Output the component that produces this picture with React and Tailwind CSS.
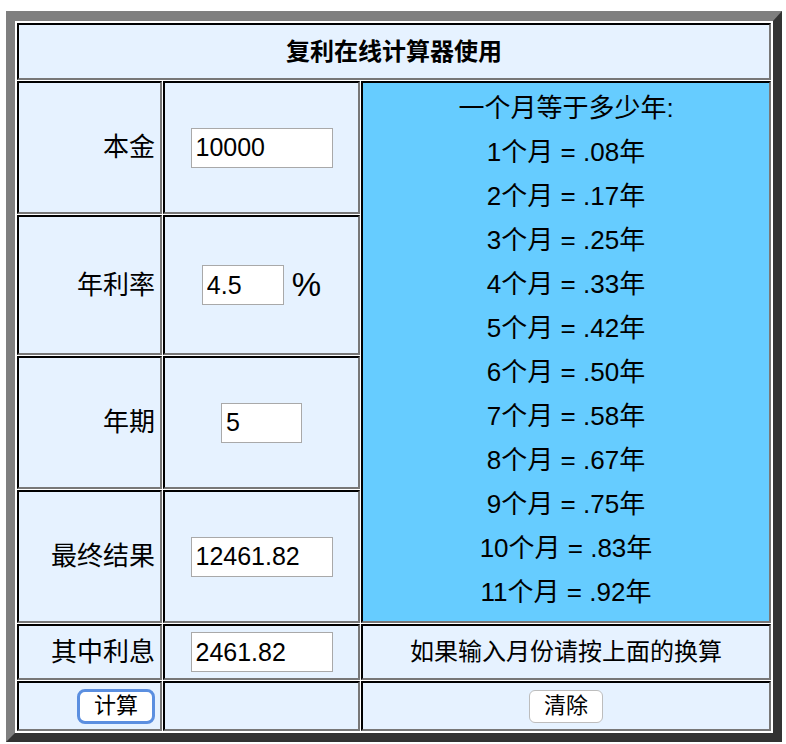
import { useState } from 'react'

const cell = 'border-2 border-t-black border-l-black border-r-[#777] border-b-[#777] bg-[#e6f2ff]'
const field = 'h-[40px] border border-[#a9a9a9] bg-white pl-[4px] text-[25px] text-black outline-none'

const months = ['.08', '.17', '.25', '.33', '.42', '.50', '.58', '.67', '.75', '.83', '.92']

function Label({ children }) {
  return (
    <div className={`${cell} flex items-center justify-end pr-[5px] text-[26px]`}>{children}</div>
  )
}

export default function App() {
  const [principal, setPrincipal] = useState('10000')
  const [rate, setRate] = useState('4.5')
  const [years, setYears] = useState('5')
  const [total, setTotal] = useState('12461.82')
  const [interest, setInterest] = useState('2461.82')

  const calc = () => {
    const p = parseFloat(principal) || 0
    const r = parseFloat(rate) || 0
    const n = parseFloat(years) || 0
    const t = p * Math.pow(1 + r / 100, n)
    setTotal(t.toFixed(2))
    setInterest((t - p).toFixed(2))
  }

  const clear = () => {
    setPrincipal('')
    setRate('')
    setYears('')
    setTotal('')
    setInterest('')
  }

  return (
    <div className="min-h-screen bg-white pl-[6px] pt-[11px] font-['Liberation_Sans','Noto_Sans_CJK_SC',sans-serif] text-black">
      <div className="grid w-[776px] grid-cols-[145px_197px_410px] grid-rows-[57px_133px_140px_133px_133px_56px_50px] gap-px border-[9px] border-t-[10px] border-t-[#7f7f7f] border-l-[#7f7f7f] border-r-[#333] border-b-[#333] bg-white p-[2px]">
        <div className={`${cell} col-span-3 flex items-center justify-center text-[24px] font-bold`}>
          复利在线计算器使用
        </div>

        <Label>本金</Label>
        <div className={`${cell} flex items-center justify-center`}>
          <input className={`${field} w-[142px]`} value={principal} onChange={(e) => setPrincipal(e.target.value)} />
        </div>
        <div className="row-span-4 flex flex-col items-center justify-center border-2 border-t-black border-l-black border-r-[#777] border-b-[#777] bg-[#66ccff] pb-[4px] text-[26px] leading-[44px]">
          <div>一个月等于多少年:</div>
          {months.map((value, i) => (
            <div key={value}>{i + 1}个月 = {value}年</div>
          ))}
        </div>

        <Label>年利率</Label>
        <div className={`${cell} flex items-center justify-center`}>
          <input className={`${field} w-[82px]`} value={rate} onChange={(e) => setRate(e.target.value)} />
          <span className="ml-[8px] text-[33px]">%</span>
        </div>

        <Label>年期</Label>
        <div className={`${cell} flex items-center justify-center`}>
          <input className={`${field} w-[81px]`} value={years} onChange={(e) => setYears(e.target.value)} />
        </div>

        <Label>最终结果</Label>
        <div className={`${cell} flex items-center justify-center`}>
          <input className={`${field} w-[142px]`} value={total} readOnly />
        </div>

        <Label>其中利息</Label>
        <div className={`${cell} flex items-center justify-center`}>
          <input className={`${field} w-[142px]`} value={interest} readOnly />
        </div>
        <div className={`${cell} flex items-center justify-center text-[24px]`}>如果输入月份请按上面的换算</div>

        <div className={`${cell} flex items-center justify-end pr-[5px]`}>
          <button
            className="h-[35px] w-[78px] rounded-lg border-[3px] border-[#5b8fe0] bg-white text-[22px] leading-none"
            onClick={calc}
          >
            计算
          </button>
        </div>
        <div className={cell} />
        <div className={`${cell} flex items-center justify-center`}>
          <button
            className="h-[33px] w-[74px] rounded-md border border-[#bdbdbd] bg-white text-[22px] leading-none"
            onClick={clear}
          >
            清除
          </button>
        </div>
      </div>
    </div>
  )
}
